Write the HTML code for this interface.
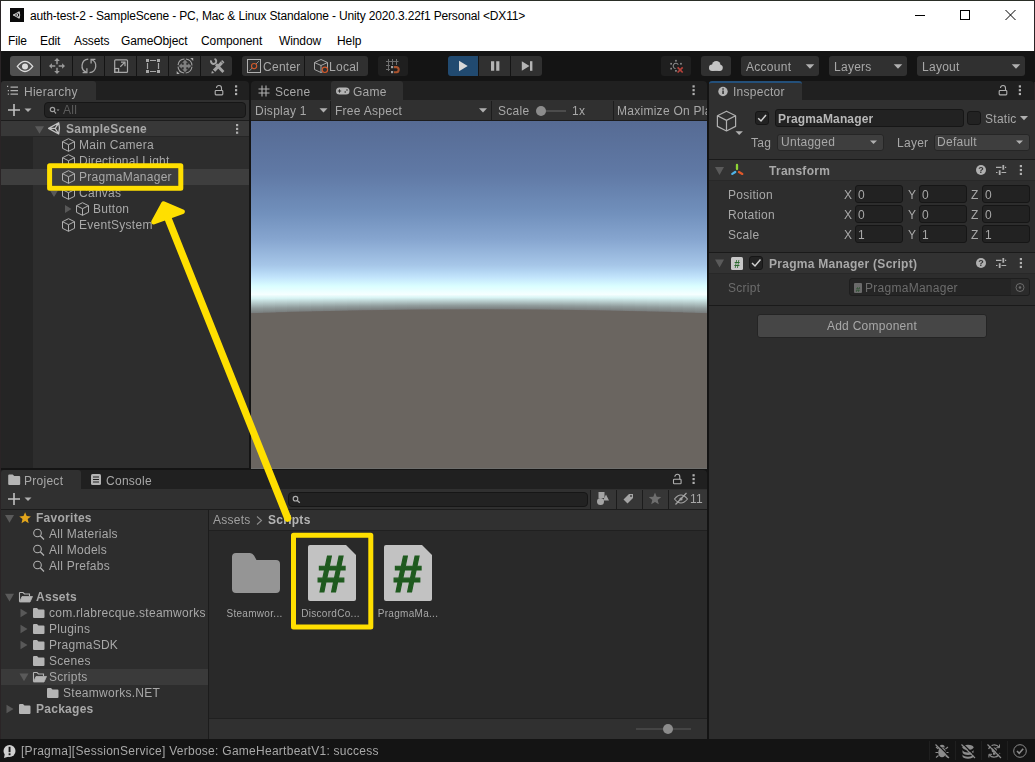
<!DOCTYPE html>
<html lang="en">
<head>
<meta charset="utf-8">
<title>Unity Editor</title>
<style>
*{box-sizing:border-box;margin:0;padding:0}
html,body{width:1035px;height:762px;overflow:hidden;background:#141414}
body{position:relative;font-family:"Liberation Sans",sans-serif;font-size:12px;color:#a8a8a8;letter-spacing:0.27px}
.a{position:absolute}
.t{position:absolute;white-space:nowrap;line-height:16px;height:16px;will-change:opacity}
.b{font-weight:700}
svg{position:absolute;overflow:visible}
/* window chrome */
#win{left:0;top:0;width:1035px;height:51px;background:#fff}
#title{will-change:auto;left:30px;top:8px;color:#000;letter-spacing:-0.15px;font-size:12px}
.menu{will-change:auto;top:33px;color:#000;letter-spacing:-0.1px;font-size:12px}
/* main toolbar */
#tb{left:0;top:51px;width:1035px;height:31px;background:#141414}
.tbtn{position:absolute;top:56px;height:20px;background:#303030}
.tbtn.on{background:#505050}
/* panels */
.panel{background:#2d2d2d}
.tabbar{background:#202020}
.tab{background:#303030}
.row{position:absolute;left:0;height:16px}
.field{position:absolute;background:#222;border:1px solid #161616;border-radius:3px}
</style>
</head>
<body>
<!-- WINDOW TITLE + MENU -->
<div id="win" class="a"></div>
<div id="title" class="t">auth-test-2 - SampleScene - PC, Mac &amp; Linux Standalone - Unity 2020.3.22f1 Personal &lt;DX11&gt;</div>
<div class="t menu" style="left:8px">File</div>
<div class="t menu" style="left:40px">Edit</div>
<div class="t menu" style="left:74px">Assets</div>
<div class="t menu" style="left:121px">GameObject</div>
<div class="t menu" style="left:201px">Component</div>
<div class="t menu" style="left:279px">Window</div>
<div class="t menu" style="left:337px">Help</div>

<!--WIN_S-->
<div class="a" style="left:0;top:0;width:1035px;height:1px;background:#2a2e26"></div>
<div class="a" style="left:1034px;top:0;width:1px;height:762px;background:#2a2426"></div>
<div class="a" style="left:10px;top:8px;width:14px;height:14px;background:#0a0a0a"></div>
<svg style="left:0;top:0" width="1035" height="32" viewBox="0 0 1035 32" fill="none">
 <path d="M13.300 15L19.200 11.800Q20.200 15 19.200 18.200L13.300 15ZM13.300 15H17.200M17.200 15L19.200 11.800M17.200 15L19.200 18.200" stroke="#e0e0e0" stroke-width="0.900" stroke-linejoin="round"/>
 <path d="M915 15.500H925" stroke="#000" stroke-width="1"/>
 <rect x="960.500" y="10.500" width="9" height="9" stroke="#000" stroke-width="1"/>
 <path d="M1005.500 10L1015.500 20M1015.500 10L1005.500 20" stroke="#000" stroke-width="1"/>
</svg>
<!--WIN_E-->
<!-- MAIN TOOLBAR -->
<div id="tb" class="a"></div>
<!--TOOLBAR_S-->
<div class="a" style="left:0;top:0;width:1px;height:762px;background:#2a2426"></div>
<div class="tbtn on" style="left:10px;width:30px;border-radius:3px 0 0 3px"></div>
<div class="tbtn" style="left:41px;width:31px"></div>
<div class="tbtn" style="left:73px;width:31px"></div>
<div class="tbtn" style="left:105px;width:31px"></div>
<div class="tbtn" style="left:137px;width:31px"></div>
<div class="tbtn" style="left:169px;width:31px"></div>
<div class="tbtn" style="left:201px;width:31px;border-radius:0 3px 3px 0"></div>
<div class="tbtn" style="left:242px;width:62px;border-radius:3px 0 0 3px"></div>
<div class="tbtn" style="left:305px;width:63px;border-radius:0 3px 3px 0"></div>
<div class="tbtn" style="left:378px;width:30px;border-radius:3px;background:#1f1f1f"></div>
<div class="tbtn" style="left:448px;width:30px;border-radius:3px 0 0 3px;background:#214a70"></div>
<div class="tbtn" style="left:479px;width:31px"></div>
<div class="tbtn" style="left:511px;width:31px;border-radius:0 3px 3px 0"></div>
<div class="tbtn" style="left:661px;width:30px;border-radius:3px;background:#1f1f1f"></div>
<div class="tbtn" style="left:701px;width:30px;border-radius:3px"></div>
<div class="tbtn" style="left:741px;width:78px;border-radius:3px"></div>
<div class="tbtn" style="left:829px;width:78px;border-radius:3px"></div>
<div class="tbtn" style="left:917px;width:108px;border-radius:3px"></div>
<div class="t" style="left:263px;top:59px">Center</div>
<div class="t" style="left:329px;top:59px">Local</div>
<div class="t" style="left:746px;top:59px">Account</div>
<div class="t" style="left:834px;top:59px">Layers</div>
<div class="t" style="left:922px;top:59px">Layout</div>
<svg style="left:0;top:51px" width="1035" height="31" viewBox="0 51 1035 31" fill="none" stroke="#b0b0b0" stroke-width="1.2">
 <!-- eye -->
 <path d="M17.300 66.400Q25 56.200 32.700 66.400Q25 76.600 17.300 66.400Z" stroke="#dcdcdc" stroke-width="1.3"/>
 <circle cx="25" cy="66.400" r="3" fill="#dcdcdc" stroke="none"/>
 <!-- move -->
 <g stroke="#7e7e7e" stroke-width="2.100">
  <path d="M57 60.500V64.300M57 67.700V71.500M51.500 66H55.300M58.700 66H62.500"/>
  <path d="M54.200 60.900L57 58L59.800 60.900ZM54.200 71.100L57 74L59.800 71.100ZM51.900 63.200L49 66L51.900 68.800ZM62.100 63.200L65 66L62.100 68.800Z" stroke="none" fill="#9c9c9c"/>
 </g>
 <!-- rotate -->
 <g stroke="#a4a4a4" stroke-width="1.300">
  <path d="M88.300 59.100A6.800 6.800 0 0 0 86.600 72.300"/>
  <path d="M82.600 72.600H86.900V68.300"/>
  <path d="M89.500 72.700A6.800 6.800 0 0 0 91.200 59.500"/>
  <path d="M95.400 59.300H91.100V63.600"/>
 </g>
 <!-- scale -->
 <g stroke="#a8a8a8" stroke-width="1.200">
  <rect x="114.700" y="59.800" width="12.800" height="12.600" rx="1"/>
  <rect x="114.700" y="68.500" width="3.900" height="3.900"/>
  <path d="M120.300 66.700L124.700 62.400M121 62.200H125V66.300"/>
 </g>
 <!-- rect -->
 <g stroke="#a8a8a8" stroke-width="1.2">
  <path d="M150 60.500H156M150 71.500H156M147.500 63V69M158.500 63V69"/>
  <g fill="#a8a8a8" stroke="none"><rect x="146" y="59" width="3" height="3"/><rect x="157" y="59" width="3" height="3"/><rect x="146" y="70" width="3" height="3"/><rect x="157" y="70" width="3" height="3"/></g>
 </g>
 <!-- transform -->
 <g stroke="#a0a0a0" stroke-width="1.100">
  <circle cx="185" cy="66" r="7" stroke-dasharray="9.400 1.600" stroke-dashoffset="10.200"/>
  <path d="M185 62V70M181 66H189" stroke-width="2.600" stroke="#808080"/>
  <g fill="#808080" stroke="none"><path d="M182.200 62.800L185 59.800L187.800 62.800ZM182.200 69.200L185 72.200L187.800 69.200ZM181.800 63.200L178.800 66L181.800 68.800ZM188.200 63.200L191.200 66L188.200 68.800Z"/></g>
  <g fill="#b0b0b0" stroke="none"><path d="M190.200 58H193.200V61ZM176.700 71V74H179.700Z"/></g>
 </g>
 <!-- custom tools -->
 <g stroke="#a4a4a4" stroke-linecap="butt">
  <path d="M216 64.200L223.400 72" stroke-width="2.800"/>
  <path d="M214.500 58.900A2.600 2.600 0 1 1 211.200 60.400" stroke-width="2"/>
  <path d="M213.900 70.900L223.300 61.100" stroke-width="3.200"/>
  <path d="M211.300 73.600L212 70.800L214.200 72.900Z" fill="#a4a4a4" stroke="none"/>
  <path d="M220.900 61.300L223.200 63.500M212.800 69.800L215.100 72" stroke="#303030" stroke-width="0.700"/>
 </g>
 <!-- center icon -->
 <rect x="247.500" y="59.500" width="13" height="13" stroke="#b0b0b0" stroke-width="1"/>
 <path d="M249.300 71L258.800 61.200" stroke="#909090" stroke-width="1"/>
 <circle cx="254.100" cy="66.100" r="2.600" stroke="#d3592b" stroke-width="1.100" fill="#303030"/>
 <!-- local icon -->
 <g stroke="#a8a8a8" stroke-width="1">
  <path d="M314.500 62.500L321 59.500L327.500 62.500V69.500L321 72.500L314.500 69.500ZM314.500 62.500L321 65.500L327.500 62.500M321 65.500V72.500"/>
 </g>
 <circle cx="324.900" cy="69.800" r="2.700" stroke="#d3592b" stroke-width="1.100" fill="#303030"/>
 <!-- snap -->
 <g stroke="#6e6e6e" stroke-width="1">
  <path d="M388.500 59V71M392.500 59V65M396.500 59V65M386 61.500H398.500M386 65.500H390M386 69.500H390"/>
  <g fill="#a0a0a0" stroke="none"><rect x="391" y="66" width="2.200" height="2.200"/><rect x="391" y="71" width="2.200" height="2.200"/></g>
  <path d="M394 67.100H396.600A2.600 2.600 0 0 1 396.600 72.200H394" stroke="#a8522d" stroke-width="2.100"/>
 </g>
 <!-- play / pause / step -->
 <path d="M459 60.700V71.300L467.700 66Z" fill="#d8d8d8" stroke="none"/>
 <path d="M491 61.200H494.200V70.800H491ZM496.200 61.200H499.400V70.800H496.200Z" fill="#b4b4b4" stroke="none"/>
 <path d="M521.800 61.200V70.800L529.500 66Z" fill="#b4b4b4" stroke="none"/><rect x="530" y="61.200" width="2.400" height="9.600" fill="#b4b4b4" stroke="none"/>
 <!-- collab -->
 <g fill="#8a8a8a" stroke="none">
  <rect x="675.100" y="59.900" width="1.700" height="1.700"/><rect x="670.300" y="62.900" width="1.700" height="1.700"/><rect x="680.100" y="62.900" width="1.700" height="1.700"/><rect x="670.300" y="67.800" width="1.700" height="1.700"/><rect x="675.100" y="70" width="1.700" height="1.700"/>
 </g>
 <path d="M678.300 64.800A2.700 2.700 0 1 0 675.600 68.700" stroke="#8a8a8a" stroke-width="1.100"/>
 <path d="M677.600 67.400L682.700 72.500M682.700 67.400L677.600 72.500" stroke="#b5413a" stroke-width="1.700"/>
 <!-- cloud -->
 <g fill="#c4c4c4" stroke="none"><circle cx="716.300" cy="65.200" r="4.300"/><circle cx="712.200" cy="67.700" r="3.200"/><circle cx="719.700" cy="67.800" r="3.100"/><rect x="712.200" y="66" width="7.500" height="4.900"/></g>
 <!-- dropdown arrows -->
 <g fill="#b0b0b0" stroke="none">
  <path d="M805.700 64.200H814.300L810 68.700Z"/><path d="M893.700 64.200H902.300L898 68.700Z"/><path d="M1011.700 64.200H1020.300L1016 68.700Z"/>
 </g>
</svg>
<!--TOOLBAR_E-->

<!-- HIERARCHY -->
<!--HIER_S-->
<div class="a tabbar" style="left:1px;top:81px;width:248px;height:20px;border-radius:3px 4px 0 0"></div>
<div class="a tab" style="left:1px;top:81px;width:95px;height:20px;border-radius:3px 3px 0 0"></div>
<div class="a" style="left:1px;top:100px;width:248px;height:21px;background:#303030;border-bottom:1px solid #1c1c1c"></div>
<div class="a panel" style="left:1px;top:121px;width:248px;height:347px"></div>
<div class="a" style="left:1px;top:137px;width:32px;height:331px;background:#252525"></div>
<div class="a" style="left:1px;top:121px;width:248px;height:16px;background:#383838;border-bottom:1px solid #262626"></div>
<div class="a" style="left:1px;top:169px;width:248px;height:16px;background:#3e3e3e"></div>
<div class="t" style="left:24px;top:84px">Hierarchy</div>
<div class="field" style="left:44px;top:102px;width:202px;height:16px;border-radius:4px"></div>
<div class="t" style="left:63px;top:102px;color:#5c5c5c">All</div>
<div class="t b" style="left:66px;top:121px">SampleScene</div>
<div class="t" style="left:79px;top:137px">Main Camera</div>
<div class="t" style="left:79px;top:153px">Directional Light</div>
<div class="t" style="left:79px;top:169px">PragmaManager</div>
<div class="t" style="left:79px;top:185px">Canvas</div>
<div class="t" style="left:93px;top:201px">Button</div>
<div class="t" style="left:79px;top:217px">EventSystem</div>
<svg style="left:0;top:81px" width="250" height="390" viewBox="0 81 250 390" fill="none" stroke="#b0b0b0" stroke-width="1">
 <defs>
  <g id="cube"><path d="M0.500 3.700L6.500 0.700L12.500 3.700V10.300L6.500 13.300L0.500 10.300ZM0.500 3.700L6.500 6.700L12.500 3.700M6.500 6.700V13.300" fill="none" stroke="#b0b0b0" stroke-width="1" stroke-linejoin="round"/></g>
  <g id="kebab"><rect x="0" y="0" width="2.200" height="2.200"/><rect x="0" y="3.800" width="2.200" height="2.200"/><rect x="0" y="7.600" width="2.200" height="2.200"/></g>
  <g id="lock"><path d="M2 2.500A2.500 2.500 0 0 1 7 2.500V5" fill="none" stroke="#b0b0b0" stroke-width="1.100"/><rect x="0.700" y="5" width="7.600" height="4.400" rx="0.800" fill="none" stroke="#b0b0b0" stroke-width="1.100"/></g>
 </defs>
 <!-- hierarchy tab icon -->
 <g stroke="#b0b0b0" stroke-width="1.200"><path d="M10.500 87.200H18M10.500 90.700H18M10.500 94.200H18"/><path d="M7.800 90.700H9M7.800 94.200H9M7 86.300H8.200" /></g>
 <use href="#lock" x="214.500" y="85.500"/>
 <use href="#kebab" x="235" y="85.300" fill="#b0b0b0" stroke="none"/>
 <!-- plus -->
 <path d="M8 110H20M14 104V116" stroke="#c0c0c0" stroke-width="1.600"/>
 <path d="M24.500 108.500H31.500L28 112Z" fill="#b0b0b0" stroke="none"/>
 <!-- search icon -->
 <circle cx="52.500" cy="109.500" r="2.200" stroke="#a0a0a0" stroke-width="1.200"/><path d="M54 111.200L56 113.500" stroke="#a0a0a0" stroke-width="1.200"/>
 <path d="M56.500 109.500H59.500L58 111Z" fill="#a0a0a0" stroke="none"/>
 <!-- scene row -->
 <path d="M35 126.200H44L39.500 133.800Z" fill="#5a5a5a" stroke="none"/>
 <g stroke="#c4c4c4" stroke-width="1.300" stroke-linejoin="round"><path d="M48.600 128.400L58.700 122.800Q60.300 128.400 58.700 134L48.600 128.400ZM48.600 128.400H55.200M55.200 128.400L58.700 122.800M55.200 128.400L58.700 134"/></g>
 <use href="#kebab" x="236" y="124" fill="#b0b0b0" stroke="none"/>
 <use href="#cube" x="62" y="138"/>
 <use href="#cube" x="62" y="154"/>
 <use href="#cube" x="62" y="170"/>
 <use href="#cube" x="62" y="186"/>
 <use href="#cube" x="76" y="202"/>
 <use href="#cube" x="62" y="218"/>
 <path d="M50 190.500H58L54 197Z" fill="#585858" stroke="none"/>
 <path d="M65 205V213L71.500 209Z" fill="#585858" stroke="none"/>
</svg>
<!--HIER_E-->

<!-- GAME VIEW -->
<!--GAME_S-->
<div class="a tabbar" style="left:251px;top:81px;width:456px;height:20px;border-radius:4px 4px 0 0"></div>
<div class="a tab" style="left:331px;top:81px;width:72px;height:20px;border-radius:3px 3px 0 0"></div>
<div class="a" style="left:251px;top:100px;width:456px;height:21px;background:#303030;border-bottom:1px solid #1c1c1c"></div>
<div class="a" style="left:330px;top:101px;width:1px;height:19px;background:#1c1c1c"></div>
<div class="a" style="left:491px;top:101px;width:1px;height:19px;background:#1c1c1c"></div>
<div class="a" style="left:613px;top:101px;width:1px;height:19px;background:#1c1c1c"></div>
<div class="t" style="left:275px;top:84px">Scene</div>
<div class="t" style="left:353px;top:84px">Game</div>
<div class="t" style="left:255px;top:103px">Display 1</div>
<div class="t" style="left:335px;top:103px">Free Aspect</div>
<div class="t" style="left:498px;top:103px">Scale</div>
<div class="t" style="left:572px;top:103px">1x</div>
<div class="t" style="left:617px;top:103px;width:90px;overflow:hidden">Maximize On Play</div>
<svg style="left:251px;top:121px" width="456" height="347" viewBox="0 0 456 347" preserveAspectRatio="none">
 <defs>
  <linearGradient id="sky" x1="0" y1="0" x2="0" y2="347" gradientUnits="userSpaceOnUse">
   <stop offset="0.0000" stop-color="#566b94"/>
   <stop offset="0.1513" stop-color="#6079a5"/>
   <stop offset="0.2651" stop-color="#7190bc"/>
   <stop offset="0.3401" stop-color="#86a5cf"/>
   <stop offset="0.4150" stop-color="#a6c6e8"/>
   <stop offset="0.4294" stop-color="#b0d2f0"/>
   <stop offset="0.4524" stop-color="#c4e6fc"/>
   <stop offset="0.4755" stop-color="#dafeff"/>
   <stop offset="0.4997" stop-color="#f6ffff"/>
   <stop offset="0.5089" stop-color="#d8f4f4"/>
   <stop offset="0.5202" stop-color="#b4c8c8"/>
   <stop offset="0.5314" stop-color="#909c9c"/>
   <stop offset="0.5418" stop-color="#7a7e7e"/>
   <stop offset="0.5562" stop-color="#6e6e6c"/>
   <stop offset="1.0000" stop-color="#6e6e6c"/>
  </linearGradient>
  <linearGradient id="band" x1="0" y1="0" x2="0" y2="1">
   <stop offset="0" stop-color="#f6ffff"/><stop offset="0.216" stop-color="#d8f4f4"/><stop offset="0.480" stop-color="#b4c8c8"/><stop offset="0.743" stop-color="#909c9c"/><stop offset="1" stop-color="#787c7c"/>
  </linearGradient>
  <filter id="blur" x="-10%" y="-10%" width="120%" height="120%"><feGaussianBlur stdDeviation="0.600"/></filter>
  <clipPath id="gclip"><rect x="0" y="0" width="456" height="347"/></clipPath>
 </defs>
 <rect x="0" y="0" width="456" height="348" fill="url(#sky)"/>
 <g clip-path="url(#gclip)" shape-rendering="crispEdges"><rect x="0" y="173.400" width="12.5" height="18.65" fill="url(#band)"/><rect x="12" y="173.400" width="12.5" height="18.24" fill="url(#band)"/><rect x="24" y="173.400" width="12.5" height="17.86" fill="url(#band)"/><rect x="36" y="173.400" width="12.5" height="17.50" fill="url(#band)"/><rect x="48" y="173.400" width="12.5" height="17.16" fill="url(#band)"/><rect x="60" y="173.400" width="12.5" height="16.85" fill="url(#band)"/><rect x="72" y="173.400" width="12.5" height="16.56" fill="url(#band)"/><rect x="84" y="173.400" width="12.5" height="16.29" fill="url(#band)"/><rect x="96" y="173.400" width="12.5" height="16.04" fill="url(#band)"/><rect x="108" y="173.400" width="12.5" height="15.81" fill="url(#band)"/><rect x="120" y="173.400" width="12.5" height="15.61" fill="url(#band)"/><rect x="132" y="173.400" width="12.5" height="15.43" fill="url(#band)"/><rect x="144" y="173.400" width="12.5" height="15.27" fill="url(#band)"/><rect x="156" y="173.400" width="12.5" height="15.14" fill="url(#band)"/><rect x="168" y="173.400" width="12.5" height="15.03" fill="url(#band)"/><rect x="180" y="173.400" width="12.5" height="14.94" fill="url(#band)"/><rect x="192" y="173.400" width="12.5" height="14.87" fill="url(#band)"/><rect x="204" y="173.400" width="12.5" height="14.83" fill="url(#band)"/><rect x="216" y="173.400" width="12.5" height="14.80" fill="url(#band)"/><rect x="228" y="173.400" width="12.5" height="14.80" fill="url(#band)"/><rect x="240" y="173.400" width="12.5" height="14.83" fill="url(#band)"/><rect x="252" y="173.400" width="12.5" height="14.87" fill="url(#band)"/><rect x="264" y="173.400" width="12.5" height="14.94" fill="url(#band)"/><rect x="276" y="173.400" width="12.5" height="15.03" fill="url(#band)"/><rect x="288" y="173.400" width="12.5" height="15.14" fill="url(#band)"/><rect x="300" y="173.400" width="12.5" height="15.27" fill="url(#band)"/><rect x="312" y="173.400" width="12.5" height="15.43" fill="url(#band)"/><rect x="324" y="173.400" width="12.5" height="15.61" fill="url(#band)"/><rect x="336" y="173.400" width="12.5" height="15.81" fill="url(#band)"/><rect x="348" y="173.400" width="12.5" height="16.04" fill="url(#band)"/><rect x="360" y="173.400" width="12.5" height="16.29" fill="url(#band)"/><rect x="372" y="173.400" width="12.5" height="16.56" fill="url(#band)"/><rect x="384" y="173.400" width="12.5" height="16.85" fill="url(#band)"/><rect x="396" y="173.400" width="12.5" height="17.16" fill="url(#band)"/><rect x="408" y="173.400" width="12.5" height="17.50" fill="url(#band)"/><rect x="420" y="173.400" width="12.5" height="17.86" fill="url(#band)"/><rect x="432" y="173.400" width="12.5" height="18.24" fill="url(#band)"/><rect x="444" y="173.400" width="12.5" height="18.65" fill="url(#band)"/></g>
 <g clip-path="url(#gclip)"><path d="M-20 193Q228 183.400 476 193V370H-20Z" fill="#6b6561" filter="url(#blur)"/></g>
</svg>
<svg style="left:251px;top:81px" width="456" height="40" viewBox="251 81 456 40" fill="none">
 <!-- scene icon (#) -->
 <path d="M262 85.500V96.500M266 85.500V96.500M258.500 89H269.500M258.500 93H269.500" stroke="#b0b0b0" stroke-width="1.100"/>
 <!-- gamepad -->
 <path d="M339.500 87.500H346A3.500 3.500 0 0 1 346 94.500H339.500A3.500 3.500 0 0 1 339.500 87.500Z" fill="#b4b4b4"/>
 <path d="M339.500 89.300V92.700M337.800 91H341.200" stroke="#303030" stroke-width="1"/>
 <circle cx="345.200" cy="92" r="0.800" fill="#303030"/><circle cx="347" cy="90" r="0.800" fill="#303030"/>
 <path d="M319.500 108.300H327.500L323.500 112.600Z" fill="#b0b0b0"/>
 <path d="M479 108.300H487L483 112.600Z" fill="#b0b0b0"/>
 <path d="M541 111H566" stroke="#5a5a5a" stroke-width="1.400"/>
 <circle cx="541" cy="111" r="5" fill="#8c8c8c"/>
 <use href="#kebab" x="692.500" y="85.300" fill="#b0b0b0"/>
</svg>
<!--GAME_E-->

<!-- INSPECTOR -->
<!--INSP_S-->
<div class="a tabbar" style="left:709px;top:81px;width:325px;height:20px;border-radius:3px 4px 0 0"></div>
<div class="a tab" style="left:709px;top:81px;width:93px;height:20px;border-radius:3px 3px 0 0;border-top:2px solid #24507a"></div>
<div class="a" style="left:709px;top:100px;width:326px;height:59px;background:#303030"></div>
<div class="a panel" style="left:709px;top:159px;width:326px;height:580px"></div>
<div class="a" style="left:709px;top:159px;width:326px;height:22px;background:#323232;border-top:1px solid #1a1a1a;border-bottom:1px solid #282828"></div>
<div class="a" style="left:709px;top:252px;width:326px;height:22px;background:#323232;border-top:1px solid #1a1a1a;border-bottom:1px solid #282828"></div>
<div class="a" style="left:709px;top:305px;width:326px;height:1px;background:#1a1a1a"></div>
<div class="t" style="left:733px;top:84px">Inspector</div>
<div class="field" style="left:775px;top:109px;width:189px;height:18px"></div>
<div class="t b" style="left:778px;top:111px;color:#b8b8b8;letter-spacing:0.15px">PragmaManager</div>
<div class="field" style="left:755px;top:111px;width:14px;height:14px"></div>
<div class="field" style="left:967px;top:111px;width:14px;height:14px"></div>
<div class="t" style="left:985px;top:111px">Static</div>
<div class="t" style="left:751px;top:135px">Tag</div>
<div class="a" style="left:777px;top:134px;width:107px;height:17px;background:#3e3e3e;border:1px solid #262626;border-radius:3px"></div>
<div class="t" style="left:781px;top:134px">Untagged</div>
<div class="t" style="left:897px;top:135px">Layer</div>
<div class="a" style="left:934px;top:134px;width:96px;height:17px;background:#3e3e3e;border:1px solid #262626;border-radius:3px"></div>
<div class="t" style="left:937px;top:134px">Default</div>
<div class="t b" style="left:769px;top:163px">Transform</div>
<div class="t" style="left:728px;top:187px">Position</div>
<div class="t" style="left:728px;top:207px">Rotation</div>
<div class="t" style="left:728px;top:227px">Scale</div>
<div class="t" style="left:844px;top:187px">X</div><div class="t" style="left:908px;top:187px">Y</div><div class="t" style="left:971px;top:187px">Z</div>
<div class="t" style="left:844px;top:207px">X</div><div class="t" style="left:908px;top:207px">Y</div><div class="t" style="left:971px;top:207px">Z</div>
<div class="t" style="left:844px;top:227px">X</div><div class="t" style="left:908px;top:227px">Y</div><div class="t" style="left:971px;top:227px">Z</div>
<div class="field" style="left:855px;top:185px;width:48px;height:17.5px"></div><div class="field" style="left:919px;top:185px;width:48px;height:17.5px"></div><div class="field" style="left:982px;top:185px;width:48px;height:17.5px"></div>
<div class="field" style="left:855px;top:205px;width:48px;height:17.5px"></div><div class="field" style="left:919px;top:205px;width:48px;height:17.5px"></div><div class="field" style="left:982px;top:205px;width:48px;height:17.5px"></div>
<div class="field" style="left:855px;top:225px;width:48px;height:17.5px"></div><div class="field" style="left:919px;top:225px;width:48px;height:17.5px"></div><div class="field" style="left:982px;top:225px;width:48px;height:17.5px"></div>
<div class="t" style="left:858px;top:187px">0</div><div class="t" style="left:922px;top:187px">0</div><div class="t" style="left:985px;top:187px">0</div>
<div class="t" style="left:858px;top:207px">0</div><div class="t" style="left:922px;top:207px">0</div><div class="t" style="left:985px;top:207px">0</div>
<div class="t" style="left:858px;top:227px">1</div><div class="t" style="left:922px;top:227px">1</div><div class="t" style="left:985px;top:227px">1</div>
<div class="field" style="left:749px;top:256px;width:14px;height:14px"></div>
<div class="t b" style="left:769px;top:256px">Pragma Manager (Script)</div>
<div class="t" style="left:728px;top:280px;color:#6c6c6c">Script</div>
<div class="a" style="left:849px;top:278px;width:181px;height:18px;background:#252525;border:1px solid #1e1e1e;border-radius:3px"></div><div class="a" style="left:1011px;top:279px;width:18px;height:16px;background:#2b2b2b;border-radius:0 2px 2px 0"></div>
<div class="t" style="left:865px;top:280px;color:#6c6c6c">PragmaManager</div>
<div class="a" style="left:757px;top:314px;width:230px;height:24px;background:#464646;border:1px solid #242424;border-radius:3px"></div>
<div class="t" style="left:757px;top:318px;width:230px;text-align:center">Add Component</div>
<svg style="left:709px;top:81px" width="326" height="260" viewBox="709 81 326 260" fill="none">
 <!-- info icon -->
 <circle cx="723" cy="91.500" r="4.700" fill="#b4b4b4"/><rect x="722.300" y="90.500" width="1.500" height="3.500" fill="#303030"/><rect x="722.300" y="88.300" width="1.500" height="1.400" fill="#303030"/>
 <!-- lock -->
 <use href="#lock" x="998.500" y="85.500"/>
 <use href="#kebab" x="1018.800" y="85.300" fill="#b0b0b0"/>
 <!-- big cube -->
 <path d="M717.400 115.800L726.500 111.200L735.600 115.800V126.400L726.500 131L717.400 126.400ZM717.400 115.800L726.500 120.400L735.600 115.800M726.500 120.400V131" stroke="#b0b0b0" stroke-width="1.200" stroke-linejoin="round"/>
 <path d="M735.500 131.200H742.900L739.200 135Z" fill="#b0b0b0"/>
 <!-- checkmarks -->
 <path d="M758.200 118.200L761 121L766 115" stroke="#d0d0d0" stroke-width="1.500"/>
 <path d="M752 263L755 266L760.500 259.500" stroke="#d0d0d0" stroke-width="1.500"/>
 <!-- arrows -->
 <path d="M1020 116H1028L1024 120.300Z" fill="#b0b0b0"/>
 <path d="M870 140.500H877L873.500 144Z" fill="#b0b0b0"/>
 <path d="M1016 140.500H1023L1019.500 144Z" fill="#b0b0b0"/>
 <!-- transform header -->
 <path d="M715 167H724L719.500 175Z" fill="#5a5a5a"/>
 <g stroke-linecap="round" stroke-width="2.300"><path d="M737 165V169" stroke="#8fd435"/><path d="M735.200 172L732.300 173.900" stroke="#4fb3e8"/><path d="M739 172L742.300 173.900" stroke="#e0582a"/></g>
 <g id="hdricons">
  <circle cx="981" cy="170" r="5" fill="#b0b0b0"/>
  <text x="981" y="173.300" font-family="Liberation Sans, sans-serif" font-size="9" font-weight="700" fill="#323232" text-anchor="middle" letter-spacing="0">?</text>
  <path d="M996 167.400H1001.500M1005 167.400H1006.200M996 172.500H997.500M1001.500 172.500H1006.200" stroke="#b0b0b0" stroke-width="1.200"/><path d="M1003.300 165V169.800M999.700 170.200V175" stroke="#b0b0b0" stroke-width="1.800"/>
  <g fill="#b0b0b0"><rect x="1019.800" y="165" width="2.200" height="2.200"/><rect x="1019.800" y="168.900" width="2.200" height="2.200"/><rect x="1019.800" y="172.800" width="2.200" height="2.200"/></g>
 </g>
 <use href="#hdricons" y="93"/>
 <!-- script header -->
 <path d="M715 259.500H724L719.500 267.500Z" fill="#5a5a5a"/>
 <rect x="731" y="257" width="12" height="13" rx="1.500" fill="#c8c8c8"/>
 <text x="737" y="267.500" font-family="Liberation Sans, sans-serif" font-size="10" font-weight="700" fill="#2a6a2e" text-anchor="middle" letter-spacing="0">#</text>
 <!-- script field icon -->
 <rect x="854" y="283" width="8" height="10" rx="1" fill="#6a6a6a"/>
 <text x="858" y="291.500" font-family="Liberation Sans, sans-serif" font-size="8" font-weight="700" fill="#2c5230" text-anchor="middle" letter-spacing="0">#</text>
 <circle cx="1020" cy="287.500" r="4" stroke="#6c6c6c"/><circle cx="1020" cy="287.500" r="1.300" fill="#6c6c6c"/>
</svg>
<!--INSP_E-->

<!-- PROJECT -->
<!--PROJECT_S-->
<div class="a tabbar" style="left:1px;top:470px;width:706px;height:20px;border-radius:0 4px 0 0"></div>
<div class="a tab" style="left:1px;top:470px;width:80px;height:20px;border-radius:3px 3px 0 0"></div>
<div class="a" style="left:1px;top:489px;width:706px;height:21px;background:#303030;border-bottom:1px solid #1c1c1c"></div>
<div class="a panel" style="left:1px;top:510px;width:207px;height:229px"></div>
<div class="a" style="left:208px;top:510px;width:1px;height:229px;background:#1c1c1c"></div>
<div class="a" style="left:209px;top:510px;width:498px;height:229px;background:#292929"></div>
<div class="a" style="left:209px;top:510px;width:498px;height:21px;background:#303030;border-bottom:1px solid #202020"></div>
<div class="a" style="left:209px;top:718px;width:498px;height:21px;background:#303030;border-top:1px solid #202020"></div>
<div class="a" style="left:1px;top:669px;width:207px;height:16px;background:#3a3a3a"></div>
<div class="a" style="left:591px;top:490px;width:116px;height:19px;background:#363636"></div>
<div class="a" style="left:590px;top:490px;width:1px;height:19px;background:#1c1c1c"></div>
<div class="a" style="left:616px;top:490px;width:1px;height:19px;background:#1c1c1c"></div>
<div class="a" style="left:642px;top:490px;width:1px;height:19px;background:#1c1c1c"></div>
<div class="a" style="left:668px;top:490px;width:1px;height:19px;background:#1c1c1c"></div>
<div class="field" style="left:288px;top:492px;width:300px;height:15px;border-radius:4px"></div>
<div class="t" style="left:24px;top:473px">Project</div>
<div class="t" style="left:106px;top:473px">Console</div>
<div class="t" style="left:690px;top:491px">11</div>
<div class="t b" style="left:36px;top:510px">Favorites</div>
<div class="t" style="left:49px;top:526px">All Materials</div>
<div class="t" style="left:49px;top:542px">All Models</div>
<div class="t" style="left:49px;top:558px">All Prefabs</div>
<div class="t b" style="left:36px;top:589px">Assets</div>
<div class="t" style="left:49px;top:605px">com.rlabrecque.steamworks</div>
<div class="t" style="left:49px;top:621px">Plugins</div>
<div class="t" style="left:49px;top:637px">PragmaSDK</div>
<div class="t" style="left:49px;top:653px">Scenes</div>
<div class="t" style="left:49px;top:669px">Scripts</div>
<div class="t" style="left:63px;top:685px">Steamworks.NET</div>
<div class="t b" style="left:36px;top:701px">Packages</div>
<div class="t" style="left:213px;top:512px;color:#a0a0a0">Assets</div>
<div class="t b" style="left:268px;top:512px;color:#b4b4b4">Scripts</div>
<div class="t" style="left:214.500px;top:606px;width:80px;text-align:center;font-size:10px;letter-spacing:0.3px">Steamwor...</div>
<div class="t" style="left:290.500px;top:606px;width:80px;text-align:center;font-size:10px;letter-spacing:0.3px">DiscordCo...</div>
<div class="t" style="left:368px;top:606px;width:80px;text-align:center;font-size:10px;letter-spacing:0.3px">PragmaMa...</div>
<svg style="left:0;top:469px" width="708" height="270" viewBox="0 469 708 270" fill="none">
 <defs>
  <g id="fold"><path d="M0.500 1.500Q0.500 0.500 1.500 0.500H4.500L6 2H11Q12 2 12 3V9.500Q12 10.500 11 10.500H1.500Q0.500 10.500 0.500 9.500Z" fill="#b4b4b4"/></g>
  <g id="ofold"><path d="M1 10V1.500Q1 1 1.500 1H4.500L6 2.500H11V4.500" stroke="#b4b4b4" stroke-width="1.100" fill="none"/><path d="M1 10.500L3.500 5H14L11.500 10.500Z" fill="#b4b4b4" stroke="#b4b4b4" stroke-width="0.800" stroke-linejoin="round"/></g>
  <g id="mag"><circle cx="4.500" cy="4.500" r="3.800" stroke="#b0b0b0" stroke-width="1.100" fill="none"/><path d="M7.300 7.300L11 11" stroke="#b0b0b0" stroke-width="1.300"/></g>
  <g id="tdown"><path d="M0 0H9L4.500 7.800Z" fill="#5a5a5a"/></g>
  <g id="tright"><path d="M0 0V8.500L7 4.250Z" fill="#585858"/></g>
  <g id="sicon"><path d="M2 0H38L48 10V54Q48 56 46 56H2Q0 56 0 54V2Q0 0 2 0Z" fill="#c2c2c2"/>
   <text x="23.500" y="47.300" font-family="Liberation Sans, sans-serif" font-size="51.500" font-weight="700" fill="#1f5a1f" stroke="#1f5a1f" stroke-width="1.200" text-anchor="middle" letter-spacing="0">#</text></g>
 </defs>
 <!-- tab icons -->
 <path d="M7.500 475Q7.500 474 8.500 474H12L13.500 475.500H18.500Q19.500 475.500 19.500 476.500V483.500Q19.500 484.500 18.500 484.500H8.500Q7.500 484.500 7.500 483.500Z" fill="#b4b4b4" transform="translate(0.700 0.500)"/>
 <rect x="91" y="474" width="10" height="11" rx="1.500" fill="#b4b4b4"/><path d="M93 477H99M93 479.500H99M93 482H99" stroke="#202020" stroke-width="1"/>
 <!-- lock open / kebab -->
 <use href="#lock" x="672.800" y="474.300"/>
 <use href="#kebab" x="692.500" y="474.200" fill="#b0b0b0"/>
 <!-- plus -->
 <path d="M8 499H20M14 493V505" stroke="#c0c0c0" stroke-width="1.600"/>
 <path d="M24.500 497.500H31.500L28 501Z" fill="#b0b0b0"/>
 <!-- search icon in field -->
 <circle cx="295.500" cy="498.700" r="2.300" stroke="#b0b0b0" stroke-width="1.100"/><path d="M297.200 500.400L299.800 502.800" stroke="#b0b0b0" stroke-width="1.300"/>
 <!-- toolbar right icons -->
 <rect x="598.500" y="492" width="6" height="6" fill="#a4a4a4"/><circle cx="600.500" cy="501.500" r="3.500" fill="#a4a4a4"/><path d="M603 500.500L606 494.500L609 500.500Z" fill="#a4a4a4"/>
 <path d="M623.500 499.500L629 494H633V498L627.500 503.500Z" fill="#a4a4a4"/><circle cx="631" cy="496" r="0.900" fill="#363636"/>
 <path d="M655 492.500L656.700 496.700L661.200 497L657.700 499.900L658.800 504.300L655 501.900L651.200 504.300L652.300 499.900L648.800 497L653.300 496.700Z" fill="#6e6e6e"/>
 <path d="M674.500 499Q681 491 687.500 499Q681 507 674.500 499Z" stroke="#a4a4a4" stroke-width="1.100"/><circle cx="681" cy="499" r="1.600" fill="#a4a4a4"/><path d="M675.500 504.500L686.500 493" stroke="#a4a4a4" stroke-width="1.200"/>
 <!-- favorites -->
 <use href="#tdown" x="5" y="515"/>
 <path d="M25.1 512.2L26.7 516.1L30.9 516.4L27.7 519.1L28.7 523.2L25.1 521.0L21.5 523.2L22.5 519.1L19.3 516.4L23.5 516.1Z" fill="#e2a51c"/>
 <use href="#mag" x="33" y="528.500"/><use href="#mag" x="33" y="544.500"/><use href="#mag" x="33" y="560.500"/>
 <!-- assets -->
 <use href="#tdown" x="5" y="593.800"/>
 <use href="#ofold" x="18.500" y="591.500"/>
 <use href="#tright" x="20.500" y="608.700"/><use href="#fold" x="32.500" y="607.500"/>
 <use href="#tright" x="20.500" y="624.700"/><use href="#fold" x="32.500" y="623.500"/>
 <use href="#tright" x="20.500" y="640.700"/><use href="#fold" x="32.500" y="639.500"/>
 <use href="#fold" x="32.500" y="655.500"/>
 <use href="#tdown" x="19.500" y="673.500"/><use href="#ofold" x="32.500" y="671.500"/>
 <use href="#fold" x="46.500" y="687.500"/>
 <use href="#tright" x="6.500" y="704.700"/><use href="#fold" x="18.500" y="703.500"/>
 <!-- breadcrumb sep -->
 <path d="M257 516.500L261.500 520.500L257 524.500" stroke="#8c8c8c" stroke-width="1.100"/>
 <!-- big folder -->
 <path d="M232 557Q232 553 236 553H250Q252.500 553 254 555.500L256.500 560H276Q280 560 280 564V589Q280 593 276 593H236Q232 593 232 589Z" fill="#959595"/>
 <use href="#sicon" x="308" y="545"/>
 <use href="#sicon" x="384" y="545"/>
 <!-- slider -->
 <path d="M636 729H691" stroke="#4c4c4c" stroke-width="1.400"/><circle cx="668" cy="729" r="5" fill="#8c8c8c"/>
</svg>
<!--PROJECT_E-->

<!-- STATUS BAR -->
<!--STATUS_S-->
<div class="a" style="left:0;top:739px;width:1035px;height:23px;background:#141414"></div>
<div class="t" style="left:21px;top:743px">[Pragma][SessionService] Verbose: GameHeartbeatV1: success</div>
<svg style="left:0;top:740px" width="1035" height="22" viewBox="0 740 1035 22" fill="none">
 <circle cx="9.500" cy="751" r="6" fill="#d0d0d0"/><rect x="8.600" y="746.800" width="1.900" height="5.400" fill="#141414"/><rect x="8.600" y="753.300" width="1.900" height="1.900" fill="#141414"/><path d="M4 758L5 753L9 756.500Z" fill="#d0d0d0"/>
 <g stroke="#1f1f1f"><path d="M929.500 741V760M955.500 741V760M981.500 741V760M1007.500 741V760"/></g>
 <g fill="#8c8c8c" stroke="none">
  <ellipse cx="942" cy="752.500" rx="3.800" ry="4.800"/><path d="M939.300 747.500A2.700 2.700 0 0 1 944.700 747.500Z"/>
  <ellipse cx="968" cy="747.300" rx="5.500" ry="2.600"/>
  <path d="M962.500 749.800A5.500 2.600 0 0 0 973.500 749.800V752.300A5.500 2.600 0 0 1 962.500 752.300Z"/>
  <path d="M962.500 754.200A5.500 2.600 0 0 0 973.500 754.200V756.200A5.500 2.600 0 0 1 962.500 756.200Z"/>
  <circle cx="994.200" cy="750" r="2.600"/><rect x="993" y="752.500" width="2.400" height="2.200"/>
 </g>
 <g stroke="#8c8c8c" stroke-width="1.100">
  <path d="M938.500 749L936 747M945.500 749L948 747M938 752.500H935.500M946 752.500H948.500M938.500 755.500L936 757.500M945.500 755.500L948 757.500"/>
  <path d="M988.600 749A6 6 0 0 1 999 747.200M999.800 753A6 6 0 0 1 989.400 754.800" stroke-width="1.200"/>
  <path d="M999.500 744.500V747.700H996.300M988.900 757.500V754.300H992.100" stroke-width="1"/>
  <circle cx="1020" cy="751" r="6.300" stroke-width="1"/><path d="M1017 751L1019.200 753.300L1023.200 748.800" stroke-width="1.600"/>
 </g>
 <g stroke="#141414" stroke-width="1.400"><path d="M936.500 743.500L950 757M962.500 743.500L976 757M988.500 743.500L1002 757"/></g>
 <g stroke="#8c8c8c" stroke-width="1.200"><path d="M935.500 744.500L949 758M961.500 744.500L975 758M987.500 744.500L1001 758"/></g>
</svg>
<!--STATUS_E-->

<!-- ANNOTATIONS -->
<!--ANNOT_S-->
<svg style="left:0;top:0" width="1035" height="762" viewBox="0 0 1035 762" fill="none">
 <g stroke="#ffdf00" stroke-linejoin="round">
  <rect x="49.600" y="165.700" width="131.200" height="22.600" stroke-width="5"/>
  <rect x="293.500" y="535.300" width="77.300" height="91.800" stroke-width="5"/>
  <path d="M287.700 518.100L166.900 215.700" stroke-width="7.300" stroke-linecap="round"/>
  <path d="M163.600 203.800L182.300 211.700L153.700 222Z" fill="#ffdf00" stroke-width="5"/>
 </g>
</svg>
<!--ANNOT_E-->
</body>
</html>
